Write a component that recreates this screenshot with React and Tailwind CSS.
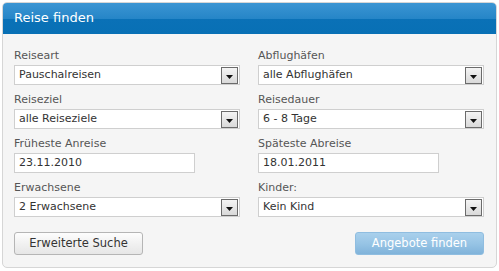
import React from 'react';

const font = { fontFamily: '"DejaVu Sans", Verdana, sans-serif' };

const Arrow = () => (
    <span className="flex h-[17px] w-[17px] items-end justify-center border border-[#6b6b6b] bg-[linear-gradient(#f4f4f4,#d9d9d9)] pb-[4px]">
        <svg width="7" height="4" viewBox="0 0 7 4"><path d="M0 0h7L3.5 4z" fill="#111" /></svg>
    </span>
);

const Select = ({ label, value }) => (
    <div className="flex flex-col">
        <label className="h-4 leading-4 text-[11px] text-[#555] mb-px">{label}</label>
        <div className="flex h-5 items-center justify-between border border-[#cfcfcf] bg-white pl-[4px] pr-px">
            <span className="text-[11px] text-[#333]">{value}</span>
            <Arrow />
        </div>
    </div>
);

const DateInput = ({ label, value }) => (
    <div className="flex flex-col">
        <label className="h-4 leading-4 text-[11px] text-[#555] mb-px">{label}</label>
        <div className="flex h-5 w-[181px] items-center border border-[#cfcfcf] bg-white pl-[4px]">
            <span className="text-[11px] text-[#333]">{value}</span>
        </div>
    </div>
);

const App = () => {
    return (
        <div className="h-[271px] w-[499px] bg-white p-[2px]" style={font}>
            <div className="flex h-[266px] flex-col overflow-hidden rounded-[5px] border border-[#d6d6d6] bg-[#f5f5f5]">
                <div className="flex h-[31px] items-center bg-[linear-gradient(#3b95d3,#2585c7_52%,#0a71b7_52%,#0870b5)] pl-[11px] pb-px">
                    <h2 className="text-[13px] text-white">Reise finden</h2>
                </div>
                <div className="grid grid-cols-2 gap-x-[18px] gap-y-[7px] pl-[11px] pr-[12px] pt-[14px]">
                    <Select label="Reiseart" value="Pauschalreisen" />
                    <Select label="Abflughäfen" value="alle Abflughäfen" />
                    <Select label="Reiseziel" value="alle Reiseziele" />
                    <Select label="Reisedauer" value="6 - 8 Tage" />
                    <DateInput label="Früheste Anreise" value="23.11.2010" />
                    <DateInput label="Späteste Abreise" value="18.01.2011" />
                    <Select label="Erwachsene" value="2 Erwachsene" />
                    <Select label="Kinder:" value="Kein Kind" />
                </div>
                <div className="flex justify-between pl-[11px] pr-[12px] pt-[15px]">
                    <button className="h-[23px] w-[129px] rounded-[3px] border border-[#b5b5b5] bg-[linear-gradient(#fdfdfd,#f1f1f1_50%,#e6e6e6)] text-[11.5px] text-[#333]">
                        Erweiterte Suche
                    </button>
                    <button className="h-[23px] w-[129px] rounded-[3px] border border-[#8fbde0] bg-[linear-gradient(#a9d0ec,#97c4e5_50%,#80b3da)] text-[11.5px] text-white">
                        Angebote finden
                    </button>
                </div>
            </div>
        </div>
    );
};

export default App;
